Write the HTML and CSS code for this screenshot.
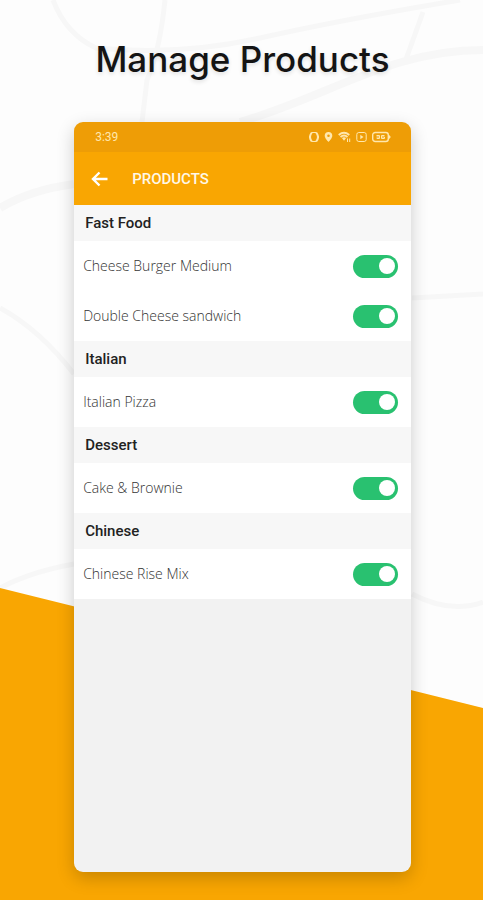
FILE: index.html
```html
<!DOCTYPE html>
<html lang="en">
<head>
<meta charset="utf-8">
<meta name="viewport" content="width=device-width, initial-scale=1">
<title>Manage Products</title>
<link rel="stylesheet" href="styles.css">
</head>
<body>
<svg class="backdrop" viewBox="0 0 483 900" preserveAspectRatio="none" aria-hidden="true">
  <g class="roads">
    <path d="M0 208Q30 190 74 184M240 122C330 96 390 50 483 50"/>
    <path class="thin" d="M53 0Q66 34 96 48Q180 56 260 38T460 0M165 0Q160 50 147 80L142 122M423 12L405 62M0 308Q40 330 74 374M0 588Q30 572 74 564M412 594Q450 614 483 602M412 298L483 294"/>
  </g>
  <path class="wedge" d="M0 588L483 708V900H0Z"/>
</svg>
<main class="page">
  <h1 class="title">Manage Products</h1>
  <section class="phone">
    <div class="status">
      <span>3:39</span>
      <div class="status-icons">
        <svg width="10" height="12" viewBox="0 0 10 12" aria-hidden="true"><path d="M2.500 1.500h5M2.500 10.500h5" fill="none" stroke="currentColor"/><path d="M2.800 1.500Q-.8 6 2.800 10.500M7.200 1.500Q10.800 6 7.200 10.500" fill="none" stroke="currentColor" stroke-width="2"/></svg>
        <svg width="9" height="12" viewBox="0 0 9 12" aria-hidden="true"><path fill-rule="evenodd" d="M4.500 1A3.800 3.800 0 0 0 .7 4.800C.7 7.500 4.500 11 4.500 11S8.300 7.500 8.300 4.800A3.800 3.800 0 0 0 4.500 1Zm0 2.500a1.300 1.300 0 1 1 0 2.600 1.300 1.300 0 0 1 0-2.600Z" fill="currentColor"/></svg>
        <svg width="13" height="12" viewBox="0 0 13 12" aria-hidden="true"><path d="M.7 4Q6 -.4 11.300 4M2.500 6Q6 3 9.500 6" fill="none" stroke="currentColor" stroke-width="1.800"/><path d="M3.900 7Q6 5.400 8.100 7L6 9.800Z" fill="currentColor"/><path d="M9.500 7.500V11M11.700 7.500V11" stroke="currentColor"/></svg>
        <svg width="11" height="12" viewBox="0 0 11 12" aria-hidden="true"><rect x=".8" y="1.500" width="9.400" height="9" rx="2" fill="none" stroke="currentColor"/><path d="M4.300 3.800L7.500 6L4.300 8.200Z" fill="currentColor"/></svg>
        <svg width="19" height="12" viewBox="0 0 19 12" aria-hidden="true"><rect x=".7" y="1.500" width="15.600" height="9" rx="2.500" fill="none" stroke="currentColor" stroke-width="1.400"/><path d="M17 3.800L18.800 6L17 8.200Z" fill="currentColor"/><path d="M4.500 4.500h3v3H4.700M4.500 6h3M12.500 4.500h-3v3h3V6h-3" fill="none" stroke="currentColor"/></svg>
      </div>
    </div>
    <header class="bar">
      <button class="back" type="button" aria-label="Back"><svg width="18" height="16" viewBox="0 0 18 16" aria-hidden="true"><path d="M16.500 8H2.500M8.500 1.500L2 8l6.500 6.500" fill="none" stroke="currentColor" stroke-width="2.400"/></svg></button>
      <h2 class="bar-title">PRODUCTS</h2>
    </header>
    <div class="menu">
      <h3 class="group">Fast Food</h3>
      <label class="item">Cheese Burger Medium<input class="toggle" type="checkbox" role="switch" checked></label>
      <label class="item">Double Cheese sandwich<input class="toggle" type="checkbox" role="switch" checked></label>
      <h3 class="group">Italian</h3>
      <label class="item">Italian Pizza<input class="toggle" type="checkbox" role="switch" checked></label>
      <h3 class="group">Dessert</h3>
      <label class="item">Cake &amp; Brownie<input class="toggle" type="checkbox" role="switch" checked></label>
      <h3 class="group">Chinese</h3>
      <label class="item">Chinese Rise Mix<input class="toggle" type="checkbox" role="switch" checked></label>
    </div>
  </section>
</main>
</body>
</html>
```
FILE: styles.css
```css
* { box-sizing: border-box; }

body {
  margin: 0;
  background: #fdfdfd;
  font-family: Roboto, sans-serif;
}

h1, h2, h3 { margin: 0; }

.backdrop {
  position: absolute;
  inset: 0;
  z-index: -1;
  width: 100%;
  height: 100%;
}

.roads {
  fill: none;
  stroke: #f7f7f7;
  stroke-width: 8;
}

.thin { stroke-width: 5; }

.wedge { fill: #f9a602; }

.page {
  min-height: 100vh;
  display: flex;
  flex-direction: column;
  align-items: center;
  gap: 42px;
  padding: 38px 0 28px 2px;
}

.title {
  font: 500 35px/42px Inter, sans-serif;
  color: #141414;
  text-shadow: 0 2px 4px rgba(0, 0, 0, 0.12);
  text-align: center;
}

.phone {
  flex: 1;
  width: 70%;
  overflow: hidden;
  border-radius: 9px;
  background: #f2f2f2;
  box-shadow: 0 6px 18px rgba(0, 0, 0, 0.2);
}

.status {
  display: flex;
  align-items: center;
  justify-content: space-between;
  height: 30px;
  padding: 0 20px 0 21px;
  background: #ee9d06;
  color: #ffe7ad;
  font-size: 12px;
}

.status-icons {
  display: flex;
  align-items: center;
  gap: 5px;
}

.bar {
  display: flex;
  align-items: center;
  gap: 23px;
  height: 53px;
  padding: 0 17px;
  background: #f9a602;
  color: #fff8e8;
}

.back {
  display: flex;
  padding: 0;
  border: 0;
  background: none;
  color: #fff;
}

.bar-title {
  font-size: 15px;
  font-weight: 500;
}

.menu { background: #fff; }

.group {
  padding: 0 11px;
  background: #f7f7f7;
  color: #222;
  font-size: 15px;
  font-weight: 500;
  line-height: 36px;
}

.item {
  display: flex;
  align-items: center;
  justify-content: space-between;
  height: 50px;
  padding: 0 13px 0 9px;
  color: #333;
  font: 300 14px/20px "Open Sans", sans-serif;
}

.toggle {
  appearance: none;
  display: flex;
  align-items: center;
  justify-content: flex-end;
  width: 45px;
  height: 23px;
  margin: 0;
  padding: 3px;
  border-radius: 12px;
  background: #b5b5b5;
}

.toggle::before {
  content: "";
  width: 16px;
  height: 16px;
  border-radius: 50%;
  background: #fff;
}

.toggle:checked { background: #29c170; }

.toggle:not(:checked) { justify-content: flex-start; }
```
